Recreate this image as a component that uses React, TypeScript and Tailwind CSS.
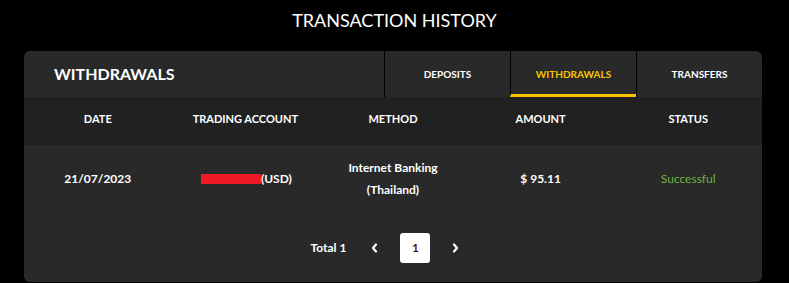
import React from 'react';

const columns = ['Date', 'Trading Account', 'Method', 'Amount', 'Status'];
const tabs = ['Deposits', 'Withdrawals', 'Transfers'];

const Chevron = ({ dir }: { dir: 'left' | 'right' }) => (
  <svg width="7" height="10" viewBox="0 0 7 10" fill="none">
    <path
      d={dir === 'left' ? 'M5 1.5 L2 5 L5 8.5' : 'M2 1.5 L5 5 L2 8.5'}
      stroke="white"
      strokeWidth="2.2"
      strokeLinecap="round"
      strokeLinejoin="round"
    />
  </svg>
);

export default function App() {
  const active = 'Withdrawals';

  return (
    <div className="w-[789px] h-[283px] bg-black text-white font-['Lato',sans-serif] overflow-hidden">
      {/* Page title */}
      <div className="h-[51px] flex justify-center pt-[8px]">
        <h1 className="text-[18px] leading-[24px] font-normal">TRANSACTION HISTORY</h1>
      </div>

      <div className="ml-[24px] w-[738px] h-[231px] bg-[#292929] rounded-[6px] overflow-hidden flex flex-col">
        {/* Card header with tabs */}
        <div className="h-[46px] flex">
          <div className="flex-1 flex items-center pl-[30px] text-[16px] font-bold">WITHDRAWALS</div>
          {tabs.map((tab) => (
            <div
              key={tab}
              className={
                tab === active
                  ? 'w-[126px] flex items-center justify-center border-l border-black border-b-[3px] border-b-[#f6c500] pt-[3px] text-[10px] font-bold uppercase text-[#f6c500]'
                  : 'w-[126px] flex items-center justify-center border-l border-black text-[10px] font-bold uppercase'
              }
            >
              {tab}
            </div>
          ))}
        </div>

        {/* Table head */}
        <div className="h-[48px] grid grid-cols-5 bg-[#212121] pb-[4px]">
          {columns.map((c) => (
            <div key={c} className="flex items-center justify-center text-[11px] font-bold uppercase">
              {c}
            </div>
          ))}
        </div>

        {/* Row */}
        <div className="h-[66px] grid grid-cols-5 text-[12px] font-bold pt-[1px]">
          <div className="flex items-center justify-center">21/07/2023</div>
          <div className="flex items-center justify-center pl-[2px]">
            <span className="inline-block w-[60px] h-[10px] bg-[#ed1c24]" />
            <span>(USD)</span>
          </div>
          <div className="flex flex-col items-center justify-center leading-[22px] text-center">
            <span>Internet Banking</span>
            <span>(Thailand)</span>
          </div>
          <div className="flex items-center justify-center">$ 95.11</div>
          <div className="flex items-center justify-center font-normal text-[#6ab53d]">Successful</div>
        </div>

        {/* Pagination */}
        <div className="flex-1 flex items-center justify-center pt-[2px] pr-[16px] text-[12px] font-bold">
          <span className="mr-[25px]">Total 1</span>
          <Chevron dir="left" />
          <div className="mx-[22px] w-[30px] h-[30px] bg-white rounded-[3px] flex items-center justify-center text-[#4a0000] font-semibold">
            1
          </div>
          <Chevron dir="right" />
        </div>
      </div>
    </div>
  );
}
